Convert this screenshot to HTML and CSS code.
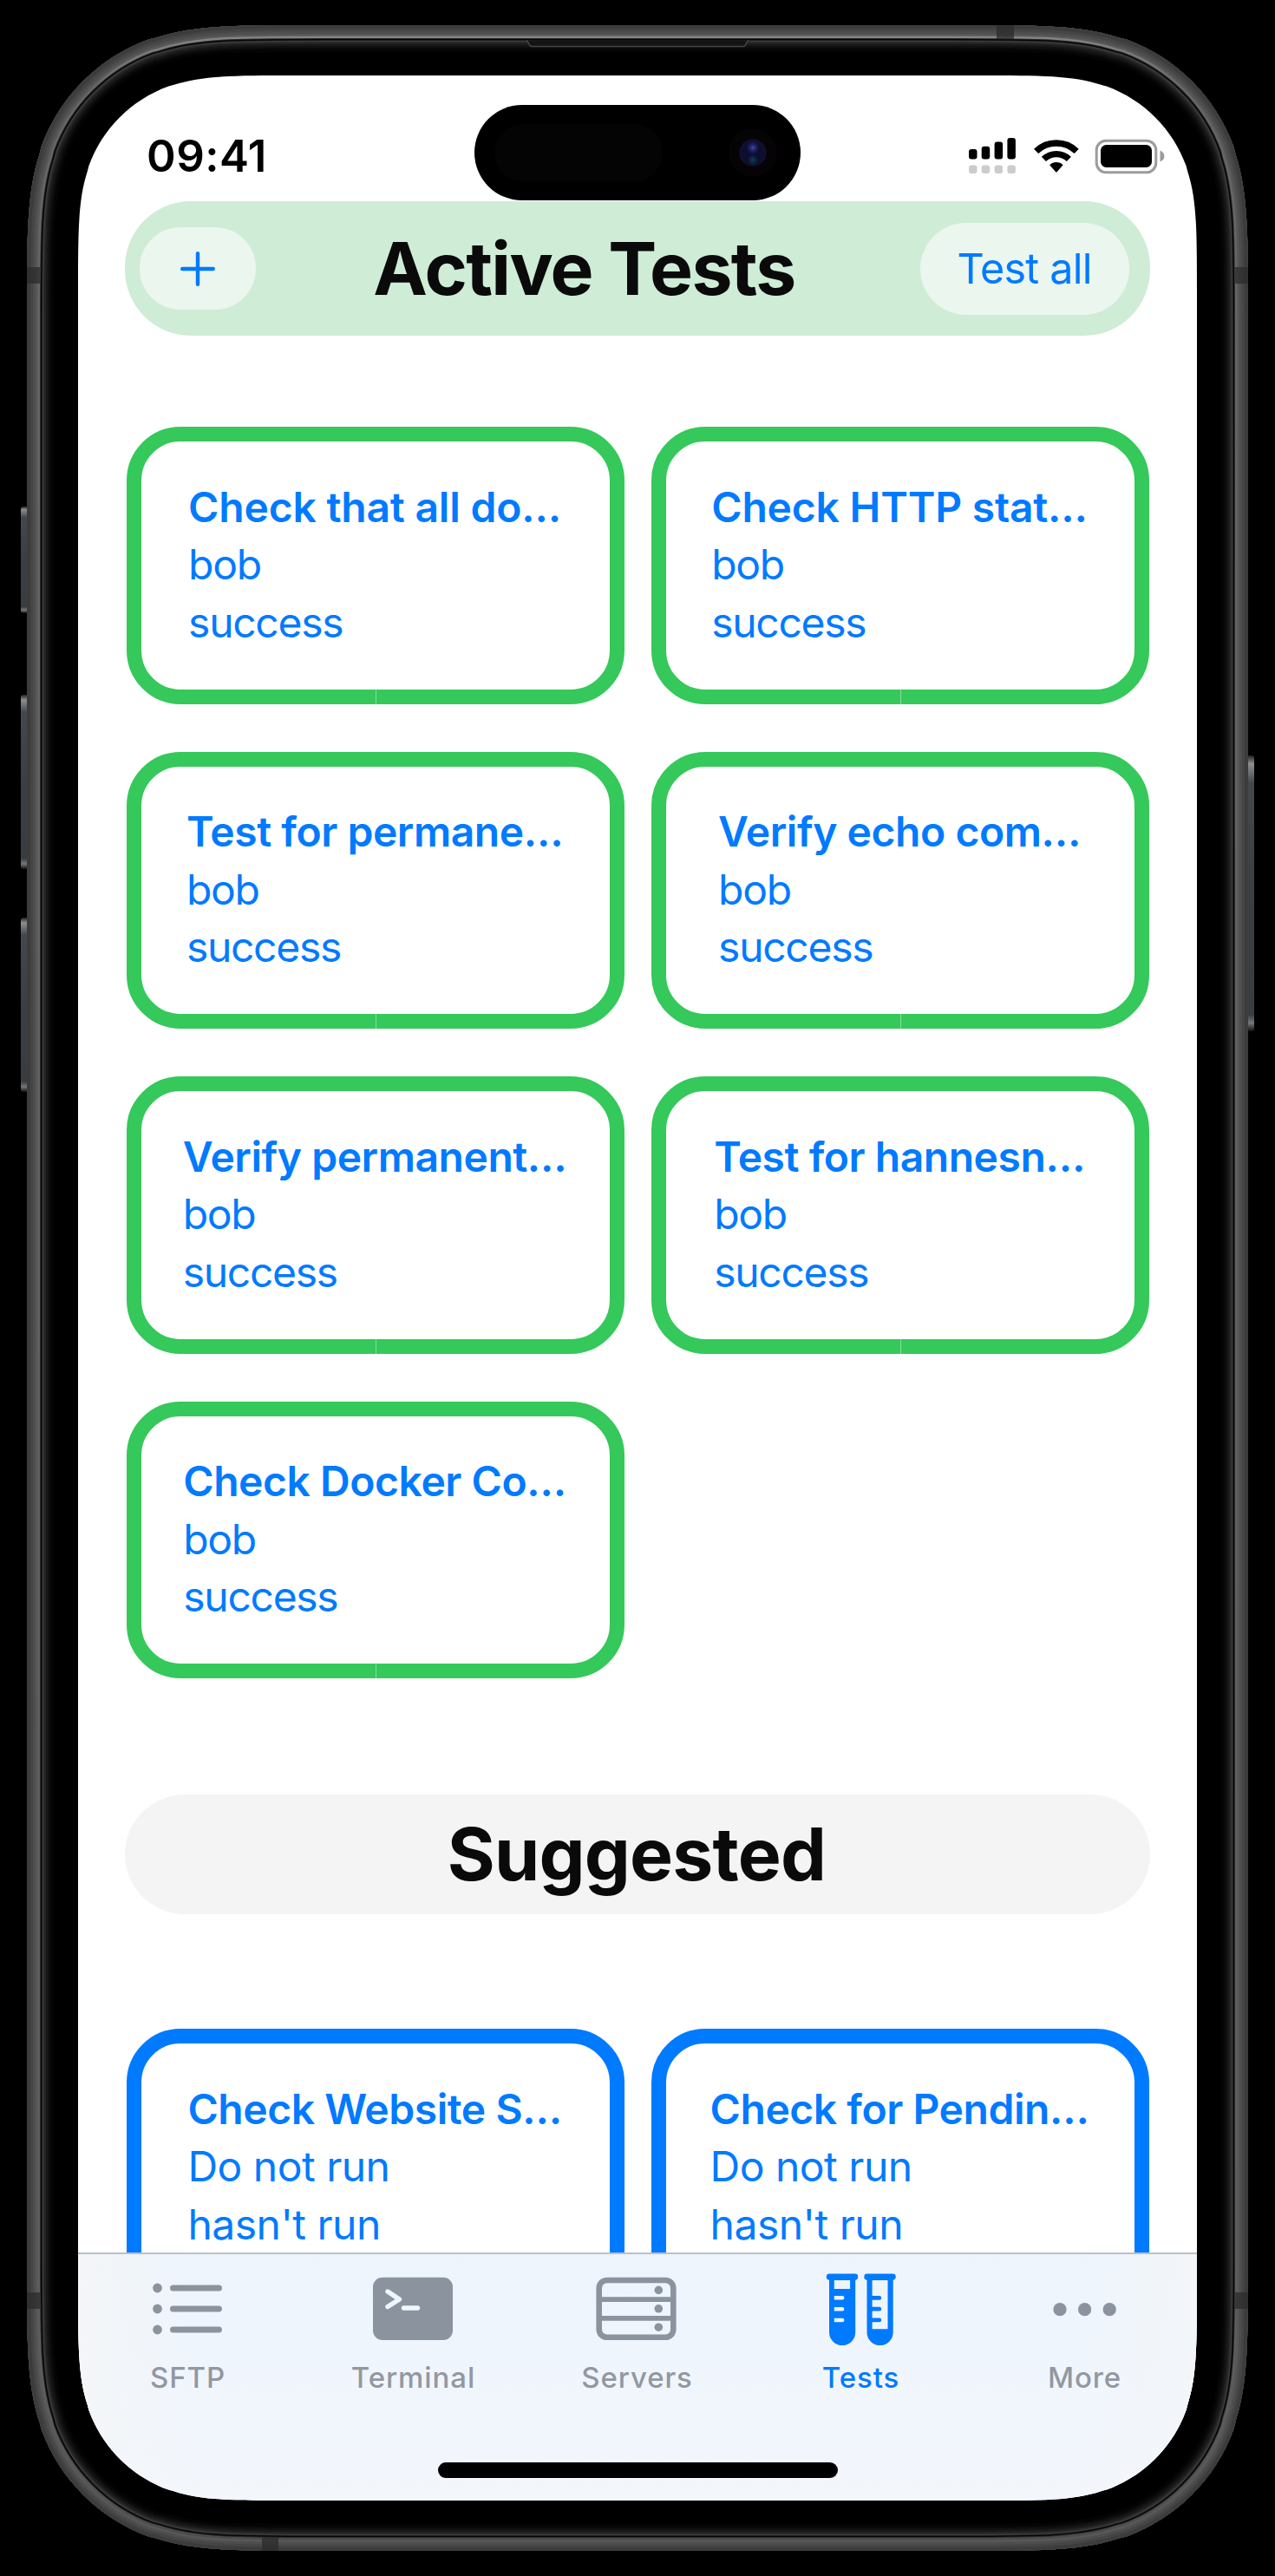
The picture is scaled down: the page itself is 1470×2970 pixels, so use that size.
FILE: index.html
```html
<!DOCTYPE html>
<html lang="en">
<head>
<meta charset="utf-8">
<title>Active Tests</title>
<link rel="stylesheet" href="styles.css">
</head>
<body>
<div class="device">
  <svg class="frame" viewBox="0 0 1470 2970" aria-hidden="true">
    <defs>
      <path id="body" d="M370.4 29H1099.6C1197.4 29 1246.2 29 1290.3 43.5L1298.8 45.6C1356.2 66.5 1401.5 111.8 1422.4 169.2L1424.5 177.7C1439 221.8 1439 270.6 1439 368.4V2601.6C1439 2699.4 1439 2748.2 1424.5 2792.3L1422.4 2800.8C1401.5 2858.2 1356.2 2903.5 1298.8 2924.4L1290.3 2926.5C1246.2 2941 1197.4 2941 1099.6 2941H370.4C272.6 2941 223.8 2941 179.7 2926.5L171.2 2924.4C113.8 2903.5 68.5 2858.2 47.6 2800.8L45.5 2792.3C31 2748.2 31 2699.4 31 2601.6V368.4C31 270.6 31 221.8 45.5 177.7L47.6 169.2C68.5 111.8 113.8 66.5 171.2 45.6L179.7 43.5C223.8 29 272.6 29 370.4 29Z"/>
      <clipPath id="inside"><use href="#body"/></clipPath>
      <linearGradient id="key" x1="0" y1="0" x2="0" y2="1">
        <stop offset="0" stop-color="#222"/><stop offset=".03" stop-color="#8c8f92"/><stop offset=".1" stop-color="#44484b"/><stop offset=".5" stop-color="#3c3f41"/><stop offset=".94" stop-color="#3a3d3f"/><stop offset=".97" stop-color="#777"/><stop offset="1" stop-color="#111"/>
      </linearGradient>
      <linearGradient id="rim" x1="0" y1="0" x2="0" y2="1">
        <stop offset="0" stop-color="#8a8a8a"/><stop offset=".025" stop-color="#666"/><stop offset=".95" stop-color="#5c5c5c"/><stop offset="1" stop-color="#4a4a4a"/>
      </linearGradient>
    </defs>
    <g fill="url(#key)">
      <rect x="24" y="584" width="9" height="123" rx="3"/>
      <rect x="24" y="801" width="9" height="201" rx="3"/>
      <rect x="24" y="1058" width="9" height="201" rx="3"/>
      <rect x="1437" y="871" width="9" height="318" rx="3"/>
    </g>
    <g clip-path="url(#inside)" fill="none">
      <use href="#body" fill="#000"/>
      <use href="#body" stroke="#040404" stroke-width="62"/>
      <use href="#body" stroke="#090909" stroke-width="56"/>
      <use href="#body" stroke="#101010" stroke-width="52"/>
      <use href="#body" stroke="#181818" stroke-width="48"/>
      <use href="#body" stroke="#212121" stroke-width="44"/>
      <use href="#body" stroke="#2c2c2c" stroke-width="41"/>
      <use href="#body" stroke="#3a3a3a" stroke-width="38"/>
      <use href="#body" stroke="#050505" stroke-width="35"/>
      <use href="#body" stroke="#2a2a2a" stroke-width="32"/>
      <use href="#body" stroke="url(#rim)" stroke-width="30"/>
      <use href="#body" stroke="#585858" stroke-width="25"/>
      <use href="#body" stroke="#4e4e4e" stroke-width="20"/>
      <use href="#body" stroke="#454545" stroke-width="14"/>
      <use href="#body" stroke="#3c3c3c" stroke-width="8"/>
      <g fill="#2b2b2b" fill-opacity=".75">
        <rect x="1149" y="29" width="20" height="16"/><rect x="302" y="2925" width="19" height="16"/>
        <rect x="31" y="308" width="15" height="19"/><rect x="1424" y="308" width="15" height="19"/>
        <rect x="31" y="2643" width="15" height="19"/><rect x="1424" y="2643" width="15" height="19"/>
      </g>
      <path d="M607 46.5C610 47 609 53.5 613 53.5H857C861 53.5 860 47 863 46.5Z" fill="#141414"/>
      <path d="M607 46.5C610 47 609 53.5 613 53.5H857C861 53.5 860 47 863 46.5" stroke="#444" stroke-width="1.5"/>
    </g>
  </svg>

  <main class="screen">
    <div class="status">
      <span class="clock">09:41</span>
      <svg class="status-icons" viewBox="1117 155 226 50" aria-hidden="true">
        <g>
          <rect x="1117" y="172" width="9.5" height="11.5" rx="3"/><rect x="1131.7" y="168.7" width="9.5" height="14.8" rx="3"/><rect x="1146.6" y="163.5" width="9.5" height="20" rx="3"/><rect x="1161.4" y="159" width="9.5" height="24.5" rx="3"/>
        </g>
        <g fill="#ccc">
          <rect x="1117" y="190.5" width="9.5" height="9.5" rx="3"/><rect x="1131.7" y="190.5" width="9.5" height="9.5" rx="3"/><rect x="1146.6" y="190.5" width="9.5" height="9.5" rx="3"/><rect x="1161.4" y="190.5" width="9.5" height="9.5" rx="3"/>
        </g>
        <g fill="none" stroke="#000" stroke-width="7.4">
          <path d="M1194.6 174.4A33.5 33.5 0 0 1 1241.2 174.4"/>
          <path d="M1203.4 183.4A21 21 0 0 1 1232.4 183.4"/>
        </g>
        <path d="M1210.2 190.2A11 11 0 0 1 1225.6 190.2L1218.8 197.9Q1217.9 198.9 1217 197.9Z"/>
        <rect x="1264.2" y="162.2" width="68.6" height="36.6" rx="11" fill="none" stroke="#9b9b9b" stroke-width="3"/>
        <rect x="1269" y="167" width="59" height="26" rx="6.5"/>
        <path d="M1337.5 173.5Q1342.4 175.5 1342.4 180T1337.5 186.5Z" fill="#9b9b9b"/>
      </svg>
      <div class="island"><span class="sensor"></span><span class="lens"></span></div>
    </div>

    <div class="content">
      <header class="bar active">
        <button class="chip add" aria-label="Add"><svg viewBox="0 0 40 40"><path d="M20 2.2V37.8M2.2 20H37.8" stroke="#007aff" stroke-width="4.4" stroke-linecap="round"/></svg></button>
        <h1 class="heading">Active Tests</h1>
        <button class="chip all">Test all</button>
      </header>

      <section class="grid">
        <article class="card"><div class="info"><h2 class="wide">Check that all do…</h2><p>bob</p><p>success</p></div></article>
        <article class="card"><div class="info"><h2 class="wide">Check HTTP stat…</h2><p>bob</p><p>success</p></div></article>
        <article class="card"><div class="info"><h2>Test for permane…</h2><p>bob</p><p>success</p></div></article>
        <article class="card"><div class="info"><h2>Verify echo com…</h2><p>bob</p><p>success</p></div></article>
        <article class="card"><div class="info"><h2>Verify permanent…</h2><p>bob</p><p>success</p></div></article>
        <article class="card"><div class="info"><h2>Test for hannesn…</h2><p>bob</p><p>success</p></div></article>
        <article class="card"><div class="info"><h2>Check Docker Co…</h2><p>bob</p><p>success</p></div></article>
      </section>

      <header class="bar suggested"><h1 class="heading">Suggested</h1></header>

      <section class="grid">
        <article class="card idle"><div class="info"><h2>Check Website S…</h2><p>Do not run</p><p>hasn't run</p></div></article>
        <article class="card idle"><div class="info"><h2>Check for Pendin…</h2><p>Do not run</p><p>hasn't run</p></div></article>
      </section>
    </div>

    <nav class="tabs">
      <a class="tab first">
        <svg viewBox="0 0 100 90"><g fill="currentColor"><circle cx="14.5" cy="21" r="5.4"/><circle cx="14.5" cy="45" r="5.4"/><circle cx="14.5" cy="69" r="5.4"/><rect x="29" y="17.4" width="60" height="7.2" rx="3.6"/><rect x="29" y="41.4" width="60" height="7.2" rx="3.6"/><rect x="29" y="65.4" width="60" height="7.2" rx="3.6"/></g></svg>
        <span>SFTP</span>
      </a>
      <a class="tab">
        <svg viewBox="0 0 100 90"><rect x="3" y="8.7" width="92" height="72.3" rx="11" fill="currentColor"/><path d="M20 25L33.5 34L20 42.5M38.5 44H54.5" fill="none" stroke="#f0f6fd" stroke-width="5.4" stroke-linecap="round" stroke-linejoin="round"/></svg>
        <span>Terminal</span>
      </a>
      <a class="tab">
        <svg viewBox="0 0 100 90"><g transform="translate(-1.5)"><g fill="none" stroke="currentColor" stroke-width="6.6"><rect x="7.2" y="12" width="85.6" height="65.7" rx="9"/><path d="M7 34.2H93M7 55.8H93" stroke-width="5.8"/></g><g fill="currentColor"><circle cx="75.8" cy="23.4" r="4.8"/><circle cx="75.8" cy="44.8" r="4.8"/><circle cx="75.8" cy="66.2" r="4.8"/></g></g></svg>
        <span>Servers</span>
      </a>
      <a class="tab on">
        <svg viewBox="0 0 100 90"><g fill="currentColor"><rect x="9.8" y="4.5" width="36.4" height="7.2" rx="3.4"/><rect x="53.3" y="4.5" width="36.4" height="7.2" rx="3.4"/><path fill-rule="evenodd" d="M13 8H43.2V72A15.1 15.1 0 0 1 13 72ZM18.8 12V22H37.1V12ZM18.8 30V34.5H28.2Q30.4 34.5 30.4 32.2T28.2 30ZM18.8 43V47.5H28.2Q30.4 47.5 30.4 45.2T28.2 43ZM18.8 55.7V60.2H28.2Q30.4 60.2 30.4 58T28.2 55.7Z"/><path fill-rule="evenodd" d="M56.5 8H86.7V72A15.1 15.1 0 0 1 56.5 72ZM62.6 12V68.2H80.5V12Z"/><rect x="60" y="29.9" width="13.2" height="4.8" rx="2.2"/><rect x="60" y="42.7" width="13.2" height="4.8" rx="2.2"/><rect x="60" y="55.5" width="13.2" height="4.8" rx="2.2"/></g></svg>
        <span>Tests</span>
      </a>
      <a class="tab">
        <svg viewBox="0 0 100 90"><g fill="currentColor"><circle cx="21" cy="45.7" r="7.6"/><circle cx="49.6" cy="45.7" r="7.6"/><circle cx="78.2" cy="45.7" r="7.6"/></g></svg>
        <span>More</span>
      </a>
      <div class="home"></div>
    </nav>
  </main>
</div>
</body>
</html>
```
FILE: styles.css
```css
* { box-sizing: border-box; margin: 0; padding: 0; }

body {
  background: #000;
  font-family: Inter, "Liberation Sans", sans-serif;
}

.device {
  position: relative;
  width: 1470px;
  height: 2970px;
  padding: 87px 90px;
  overflow: hidden;
}

.frame { position: absolute; inset: 0; width: 1470px; height: 2970px; }

.screen {
  position: relative;
  display: flex;
  flex-direction: column;
  width: 1290px;
  height: 2796px;
  background: #fff;
  clip-path: path("M252.2 0H1037.8C1110.4 0 1146.7 0 1179.5 10.8L1185.8 12.4C1228.5 27.9 1262.1 61.5 1277.6 104.2L1279.2 110.5C1290 143.3 1290 179.6 1290 252.2V2543.8C1290 2616.4 1290 2652.7 1279.2 2685.5L1277.6 2691.8C1262.1 2734.5 1228.5 2768.1 1185.8 2783.6L1179.5 2785.2C1146.7 2796 1110.4 2796 1037.8 2796H252.2C179.6 2796 143.3 2796 110.5 2785.2L104.2 2783.6C61.5 2768.1 27.9 2734.5 12.4 2691.8L10.8 2685.5C0 2652.7 0 2616.4 0 2543.8V252.2C0 179.6 0 143.3 10.8 110.5L12.4 104.2C27.9 61.5 61.5 27.9 104.2 12.4L110.5 10.8C143.3 0 179.6 0 252.2 0Z");
}

/* Status bar */
.status {
  position: relative;
  flex: none;
  display: flex;
  justify-content: space-between;
  align-items: flex-start;
  height: 145px;
  padding: 62px 37px 0 79px;
}
.clock { font-size: 51px; font-weight: 600; line-height: 62px; letter-spacing: 0.5px; }
.status-icons { width: 226px; height: 50px; margin-top: 6px; }
.island {
  position: absolute;
  top: 34px;
  left: 457px;
  width: 376px;
  height: 110px;
  border-radius: 55px;
  background: #000;
}
.sensor { position: absolute; left: 23px; top: 22px; width: 194px; height: 66px; border-radius: 33px; background: #040404; }
.lens {
  position: absolute;
  left: 305px;
  top: 39px;
  width: 32px;
  height: 32px;
  border-radius: 50%;
  background:
    radial-gradient(circle at 50% 32%, #4747a8 0, #23236a 12%, transparent 28%),
    radial-gradient(circle at 50% 76%, #0b3f4c 0, transparent 22%),
    radial-gradient(circle, #0d0d33 0, #0d0d30 52%, #11112b 66%, #050510 72%);
  box-shadow: 0 0 0 12px #050305;
}

/* Scrolling content */
.content { flex: 1; min-height: 0; overflow: hidden; padding: 0 54px; }

.bar { display: flex; align-items: center; justify-content: center; }
.bar.active { height: 155px; padding: 0 24px 0 17px; border-radius: 76px; background: #cfecd6; }
.bar.suggested { height: 138px; margin: 134px 0 132px; border-radius: 69px; background: #f4f4f4; }
.heading { flex: 1; text-align: center; font-size: 84px; font-weight: 700; line-height: 100px; color: #0a0a0a; white-space: nowrap; }
.active .heading { padding-right: 9px; letter-spacing: -1.65px; }
.suggested .heading { padding-right: 2px; letter-spacing: -0.8px; }

.chip {
  flex: none;
  display: flex;
  align-items: center;
  justify-content: center;
  border: 0;
  background: #ebf6ee;
  color: #007aff;
  font: 400 48.5px/60px Inter, "Liberation Sans", sans-serif;
  white-space: nowrap;
}
.add { width: 134px; height: 95px; border-radius: 47px; }
.add svg { width: 40px; height: 40px; }
.all { width: 241px; height: 106px; padding-right: 1px; border-radius: 53px; letter-spacing: -0.8px; }

.grid {
  display: grid;
  grid-template-columns: 574px 574px;
  column-gap: 31px;
  row-gap: 55px;
  padding: 0 2px;
}
.bar.active + .grid { margin-top: 105px; }

.card {
  display: flex;
  justify-content: center;
  height: 319.5px;
  padding: 42.5px 2px 0 0;
  border: 17px solid #35c85a;
  border-radius: 62px;
  color: #007aff;
  position: relative;
}
.card::after {
  content: "";
  position: absolute;
  left: 269.5px;
  bottom: -17px;
  width: 1px;
  height: 17px;
  background: #86df9c;
}
.card.idle { border-color: #007aff; }
.card.idle::after { display: none; }
.info h2, .info p { font-size: 48px; line-height: 66.6px; white-space: nowrap; }
.info h2 { font-weight: 600; letter-spacing: -0.45px; }
.info h2.wide { letter-spacing: -0.2px; }
.info p { font-weight: 400; letter-spacing: -1.3px; }
.idle .info p { letter-spacing: -0.5px; }

/* Tab bar */
.tabs {
  position: relative;
  flex: none;
  display: grid;
  grid-template-columns: repeat(5, 258px);
  height: 286px;
  border-top: 2px solid #bcc0c5;
  background: linear-gradient(90deg, #f4f6f8 0, rgba(240, 246, 253, 0) 10%, rgba(240, 246, 253, 0) 90%, #f3f6f9 100%), linear-gradient(#edf4fc, #f1f6fd 60%, #f3f6fb);
}
.tab { display: flex; flex-direction: column; align-items: center; padding-top: 18px; color: #8b949e; }
.tab.first { padding-right: 4px; }
.tab svg { width: 100px; height: 90px; }
.tab span { margin-top: 14px; padding-right: 1px; font-size: 33px; font-weight: 500; line-height: 40px; color: #9298a2; letter-spacing: 0.9px; }
.tab.on, .tab.on span { color: #007aff; }
.home { position: absolute; left: 415px; bottom: 26.5px; width: 461px; height: 17.5px; border-radius: 9px; background: #000; }
```
